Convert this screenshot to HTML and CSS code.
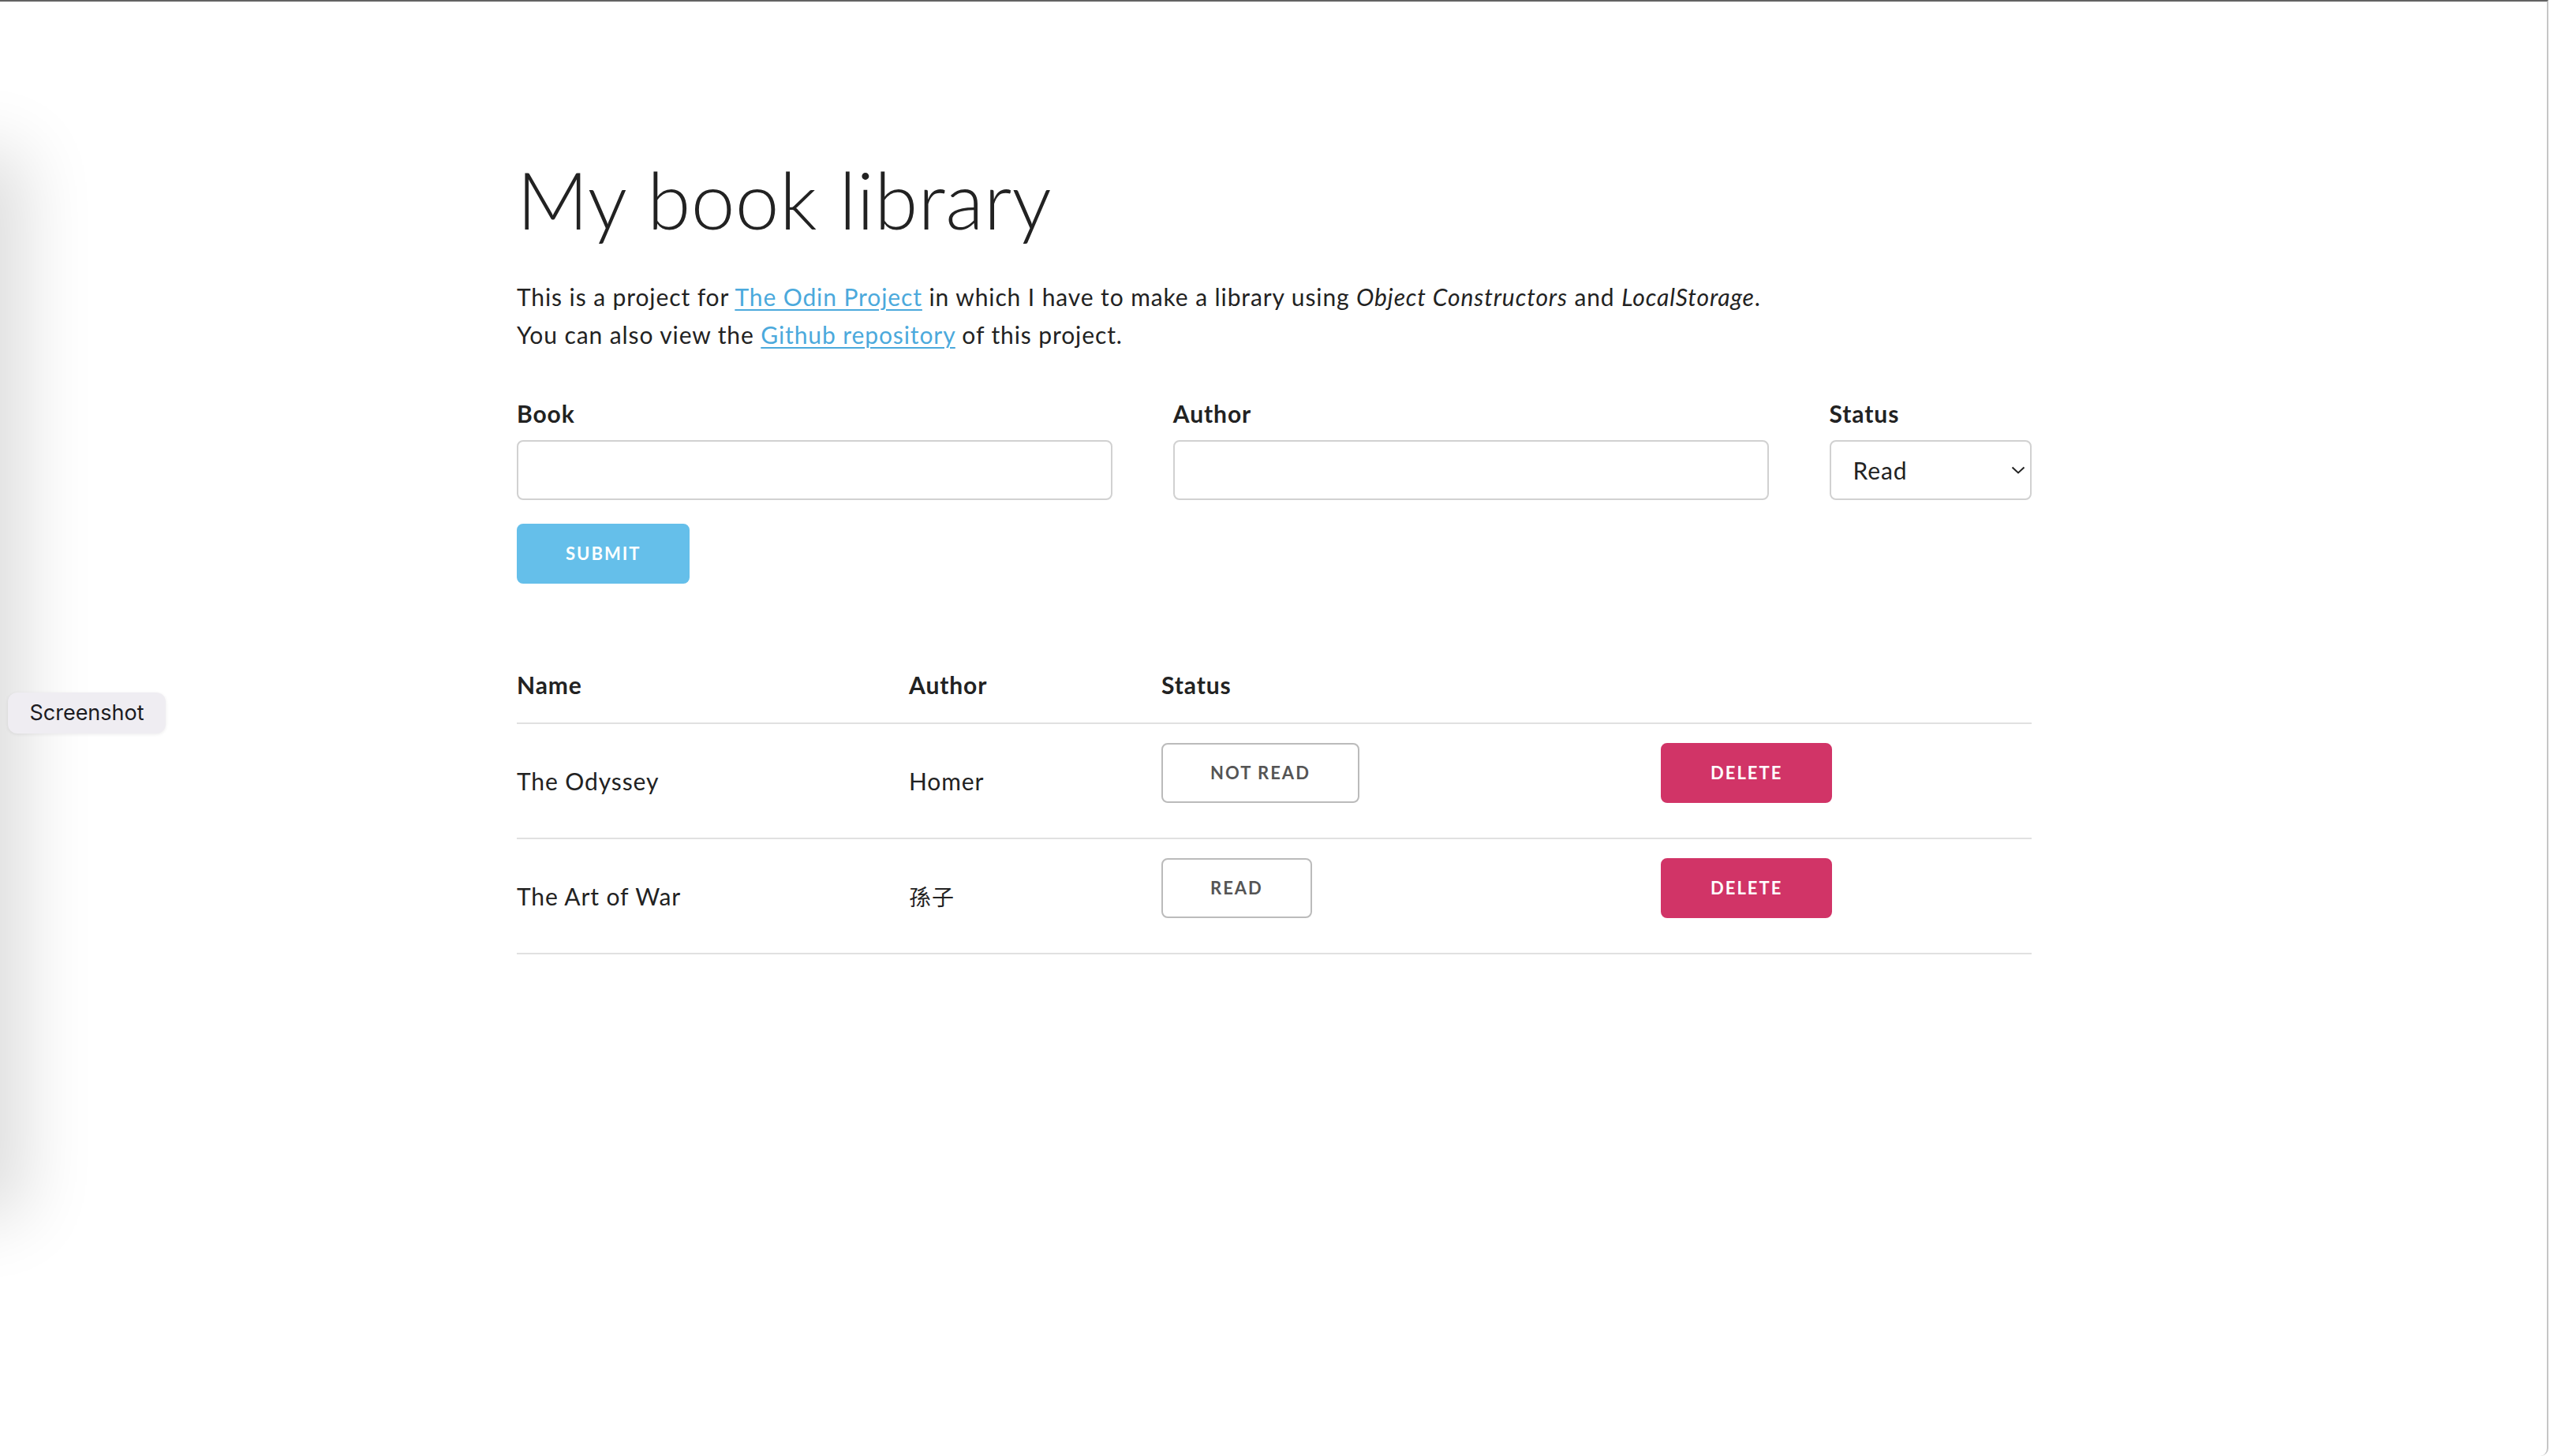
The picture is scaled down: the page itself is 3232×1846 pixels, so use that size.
FILE: index.html
```html
<!DOCTYPE html>
<html lang="en">
<head>
<meta charset="utf-8">
<title>My book library</title>
<link rel="stylesheet" href="styles.css">
</head>
<body>
<div class="window">
  <div class="container">
    <h1 class="title">My book library</h1>
    <p class="intro">This is a project for <a href="#">The Odin Project</a> in which I have to make a library using <em>Object Constructors</em> and <em>LocalStorage</em>.<br>You can also view the <a href="#">Github repository</a> of this project.</p>

    <form class="book-form">
      <div class="form-row">
        <div class="field field-wide">
          <label class="field-label" for="book">Book</label>
          <input class="text-input" id="book" type="text">
        </div>
        <div class="field field-wide">
          <label class="field-label" for="author">Author</label>
          <input class="text-input" id="author" type="text">
        </div>
        <div class="field field-narrow">
          <label class="field-label" for="status">Status</label>
          <div class="select-wrap">
            <select class="select-input" id="status">
              <option>Read</option>
              <option>Not read</option>
            </select>
            <svg class="select-chevron" width="18" height="10" viewBox="0 0 18 10"><path d="M1.5 1.5 L9 8.5 L16.5 1.5" fill="none" stroke="#222" stroke-width="2"/></svg>
          </div>
        </div>
      </div>
      <button class="btn btn-primary" type="button">Submit</button>
    </form>

    <table class="book-table">
      <colgroup>
        <col class="col-name">
        <col class="col-author">
        <col class="col-status">
        <col class="col-action">
      </colgroup>
      <thead>
        <tr><th>Name</th><th>Author</th><th>Status</th><th></th></tr>
      </thead>
      <tbody>
        <tr>
          <td>The Odyssey</td>
          <td>Homer</td>
          <td><button class="btn" type="button">Not read</button></td>
          <td><button class="btn btn-danger" type="button">Delete</button></td>
        </tr>
        <tr>
          <td>The Art of War</td>
          <td class="cjk">孫子</td>
          <td><button class="btn" type="button">Read</button></td>
          <td><button class="btn btn-danger" type="button">Delete</button></td>
        </tr>
      </tbody>
    </table>
  </div>

  <div class="side-shadow"></div>
  <div class="screenshot-pill">Screenshot</div>
</div>
</body>
</html>
```

FILE: styles.css
```css
html, body {
  margin: 0;
  padding: 0;
  background: #ffffff;
}

body {
  font-family: "Lato", "Noto Sans CJK JP", sans-serif;
  font-size: 30px;
  line-height: 48px;
  letter-spacing: 0.9px;
  color: #222222;
}

.window {
  position: relative;
  width: 3230px;
  height: 1846px;
  box-sizing: border-box;
  padding-left: 2px;
  border-top: 2px solid #626262;
  border-right: 2px solid #c6c6c6;
  border-bottom-right-radius: 10px;
  overflow: hidden;
}

.container {
  width: 1920px;
  margin: 0 auto;
  padding-top: 190px;
}

.title {
  margin: 0 0 40px 0;
  font-size: 100px;
  font-weight: 300;
  line-height: 120px;
  letter-spacing: 0.3px;
}

.intro {
  margin: 0 0 52px 0;
}

.intro a {
  color: #4ba9dc;
  text-decoration: underline;
  text-decoration-thickness: 2px;
  text-underline-offset: 4px;
}

.intro em {
  font-style: italic;
}

.book-form {
  margin: 0;
}

.form-row {
  display: flex;
  gap: 76.8px;
}

.field-wide {
  width: 755px;
}

.field-narrow {
  width: 256px;
}

.field-label {
  display: block;
  margin-bottom: 10px;
  font-weight: 700;
}

.text-input,
.select-input {
  display: block;
  width: 100%;
  height: 76px;
  box-sizing: border-box;
  padding: 12px 20px;
  border: 2px solid #d1d1d1;
  border-radius: 8px;
  background: #ffffff;
  font-family: inherit;
  font-size: 30px;
  letter-spacing: 0.9px;
  color: #222222;
  margin: 0 0 30px 0;
  outline: none;
}

.select-wrap {
  position: relative;
}

.select-input {
  appearance: none;
  -webkit-appearance: none;
  padding-left: 28px;
}

.select-chevron {
  position: absolute;
  right: 8px;
  top: 33px;
}

.btn {
  display: inline-block;
  height: 76px;
  box-sizing: border-box;
  padding: 0 60px;
  margin: 0 0 20px 0;
  border: 2px solid #bbbbbb;
  border-radius: 8px;
  background: transparent;
  color: #555555;
  font-family: inherit;
  font-size: 22px;
  font-weight: 700;
  line-height: 72px;
  letter-spacing: 2px;
  text-transform: uppercase;
  text-align: center;
  white-space: nowrap;
  cursor: pointer;
}

.btn-primary {
  background: #65bfea;
  border-color: #65bfea;
  color: #ffffff;
}

.btn-danger {
  background: #d13467;
  border-color: #d13467;
  color: #ffffff;
  padding: 0 61px;
}

.book-table {
  width: 1920px;
  margin-top: 60px;
  border-collapse: collapse;
  border-spacing: 0;
  table-layout: fixed;
}

.col-name { width: 467px; }
.col-author { width: 320px; }
.col-status { width: 633px; }
.col-action { width: 500px; }

.book-table th,
.book-table td {
  padding: 24px 30px;
  text-align: left;
  border-bottom: 2px solid #e1e1e1;
  vertical-align: middle;
}

.book-table th {
  font-weight: 700;
}

.book-table th:first-child,
.book-table td:first-child {
  padding-left: 0;
}

.book-table th:last-child,
.book-table td:last-child {
  padding-right: 0;
}

.cjk {
  font-family: "Noto Sans CJK TC", "Noto Sans CJK JP", sans-serif;
  font-size: 28px;
}

.side-shadow {
  position: absolute;
  left: -60px;
  top: 220px;
  width: 60px;
  height: 1290px;
  box-shadow: 0 0 90px 30px rgba(0, 0, 0, 0.14);
}

.screenshot-pill {
  position: absolute;
  left: 10px;
  top: 876px;
  width: 200px;
  height: 52px;
  box-sizing: border-box;
  border-radius: 12px;
  background: #efedf2;
  box-shadow: 0 1px 4px rgba(0, 0, 0, 0.08);
  font-family: "Inter", "Liberation Sans", sans-serif;
  font-size: 27px;
  line-height: 52px;
  letter-spacing: 0;
  color: #1c1b1f;
  text-align: center;
}
```
